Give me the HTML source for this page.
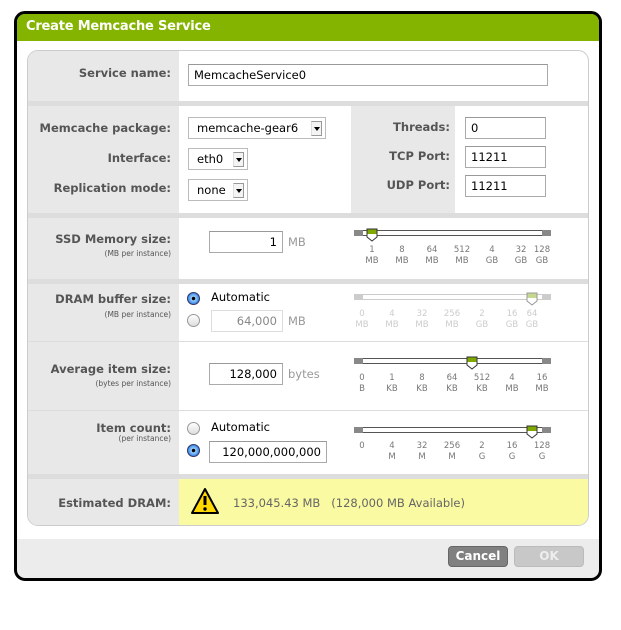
<!DOCTYPE html>
<html><head><meta charset="utf-8">
<style>
*{margin:0;padding:0;box-sizing:border-box}
body{width:621px;height:630px;background:#fff;position:relative;font-family:"DejaVu Sans","Liberation Sans",sans-serif;overflow:hidden}
.a{position:absolute}
.dlg{left:14px;top:11px;width:588px;height:570px;border:3px solid #000;border-radius:11px;background:#ececec;overflow:hidden}
.hdr{left:0;top:0;width:100%;height:27px;background:#85b400;color:#fff;font-weight:bold;font-size:13px;padding:5px 0 0 9px;letter-spacing:-0.2px}
.wbody{left:0;top:27px;width:100%;height:498px;background:#fff}
.panel{left:27px;top:50px;width:562px;height:476px;border:1px solid #ccc;border-radius:11px;overflow:hidden;background:#fff}
.lbl{position:absolute;right:450px;text-align:right;font-weight:bold;font-size:11.5px;color:#555;white-space:nowrap}
.sub{position:absolute;right:450px;text-align:right;font-size:7.5px;color:#555;white-space:nowrap}
.inp{position:absolute;border:1px solid #aaa;border-top-color:#999;background:#fff;font-size:11.5px;color:#000;height:22px;padding:3px 5px;white-space:nowrap}
.sel{position:absolute;border:1px solid #bbb;background:#fff;font-size:11.5px;height:22px;padding:3px 0 0 8px;white-space:nowrap}
.sel i{position:absolute;right:3px;top:3px;width:11px;height:15px;background:#f4f4f4;border:1px solid #999;border-left-color:#ddd}
.sel i:after{content:"";position:absolute;left:2px;top:5px;border-left:3px solid transparent;border-right:3px solid transparent;border-top:4px solid #000}
.tk{position:absolute;font-size:8.5px;color:#777;text-align:center;line-height:11px;transform:translateX(-50%)}
.dis .tk{color:#ccc}
.trk{position:absolute;left:354px;width:197px;height:6px;background:#fff;border:1px solid #555;border-radius:2px}
.trk:before,.trk:after{content:"";position:absolute;top:-1px;width:9px;height:6px;background:#888}
.trk:before{left:-1px}.trk:after{right:-1px}
.dis .trk{border-color:#ccc}.dis .trk:before,.dis .trk:after{background:#ccc}
.radio{position:absolute;width:13px;height:13px;border-radius:50%;border:1px solid #999;background:linear-gradient(#fff,#ddd)}
.radio.on{background:radial-gradient(circle,#000 0 1.5px,#9cd0ff 2px,#2a7de0 6px);border-color:#336}
.sep{position:absolute;left:0;width:100%;background:#ddd}
</style></head><body>
<div class="a dlg">
 <div class="a hdr">Create Memcache Service</div>
 <div class="a wbody"></div>
 <div class="a" style="left:431px;top:532px;width:60px;height:21px;background:#808080;border:1px solid #666;border-radius:4px;color:#fff;font-weight:bold;font-size:12px;text-align:center;line-height:19px">Cancel</div>
 <div class="a" style="left:497px;top:532px;width:70px;height:21px;background:#c8c8c8;border:1px solid #bbb;border-radius:4px;color:#eee;font-weight:bold;font-size:12px;text-align:center;line-height:19px">OK</div>
</div>
<div class="a panel">
 <div class="a" style="left:0;top:0;width:151px;height:476px;background:#e8e8e8"></div>
 <div class="a" style="left:323px;top:54px;width:104px;height:108px;background:#e8e8e8"></div>
 <div class="sep" style="top:50px;height:5px"></div>
 <div class="sep" style="top:162px;height:5px"></div>
 <div class="sep" style="top:228px;height:5px"></div>
 <div class="sep" style="top:290px;height:1px"></div>
 <div class="sep" style="top:359px;height:1px"></div>
 <div class="sep" style="top:423px;height:5px"></div>
 <div class="a" style="left:151px;top:428px;width:411px;height:48px;background:#fafaa2"></div>
</div>
<div class="a" style="left:0;top:0;width:621px;height:630px">
 <div class="lbl" style="top:66px">Service name:</div>
 <div class="inp" style="left:188px;top:64px;width:360px">MemcacheService0</div>

 <div class="lbl" style="top:121px">Memcache package:</div>
 <div class="lbl" style="top:151px">Interface:</div>
 <div class="lbl" style="top:181px">Replication mode:</div>
 <div class="sel" style="left:188px;top:117px;width:138px">memcache-gear6<i></i></div>
 <div class="sel" style="left:188px;top:148px;width:60px">eth0<i></i></div>
 <div class="sel" style="left:188px;top:179px;width:60px">none<i></i></div>
 <div class="lbl" style="top:120px;right:171px">Threads:</div>
 <div class="lbl" style="top:149px;right:171px">TCP Port:</div>
 <div class="lbl" style="top:178px;right:171px">UDP Port:</div>
 <div class="inp" style="left:465px;top:117px;width:81px">0</div>
 <div class="inp" style="left:465px;top:146px;width:81px">11211</div>
 <div class="inp" style="left:465px;top:175px;width:81px">11211</div>

 <div class="lbl" style="top:232px">SSD Memory size:</div>
 <div class="sub" style="top:249px">(MB per instance)</div>
 <div class="inp" style="left:209px;top:231px;width:74px;text-align:right">1</div>
 <div class="a" style="left:288px;top:235px;font-size:11.5px;color:#999">MB</div>
 <div><div class="trk" style="top:230px"></div>
  <span class="tk" style="left:372px;top:245px">1<br>MB</span><span class="tk" style="left:402px;top:245px">8<br>MB</span><span class="tk" style="left:432px;top:245px">64<br>MB</span><span class="tk" style="left:462px;top:245px">512<br>MB</span><span class="tk" style="left:492px;top:245px">4<br>GB</span><span class="tk" style="left:521px;top:245px">32<br>GB</span><span class="tk" style="left:542px;top:245px">128<br>GB</span>
  <svg class="a" style="left:366px;top:228px" width="12" height="14"><path d="M1 1H11V9L6 13L1 9Z" fill="#fff" stroke="#333"/><path d="M1.5 1.5H10.5V6H1.5Z" fill="#7fa800"/></svg></div>

 <div class="lbl" style="top:292px">DRAM buffer size:</div>
 <div class="sub" style="top:310px">(MB per instance)</div>
 <div class="radio on" style="left:187px;top:292px"></div>
 <div class="a" style="left:211px;top:290px;font-size:11.5px">Automatic</div>
 <div class="radio" style="left:187px;top:314px"></div>
 <div class="inp" style="left:211px;top:310px;width:72px;text-align:right;color:#888;border-color:#ddd">64,000</div>
 <div class="a" style="left:288px;top:314px;font-size:11.5px;color:#999">MB</div>
 <div class="dis"><div class="trk" style="top:294px"></div>
  <span class="tk" style="left:362px;top:309px">0<br>MB</span><span class="tk" style="left:392px;top:309px">4<br>MB</span><span class="tk" style="left:422px;top:309px">32<br>MB</span><span class="tk" style="left:452px;top:309px">256<br>MB</span><span class="tk" style="left:482px;top:309px">2<br>GB</span><span class="tk" style="left:512px;top:309px">16<br>GB</span><span class="tk" style="left:532px;top:309px">64<br>GB</span>
  <svg class="a" style="left:526px;top:292px" width="12" height="14"><path d="M1 1H11V9L6 13L1 9Z" fill="#fff" stroke="#999"/><path d="M1.5 1.5H10.5V6H1.5Z" fill="#c6d890"/></svg></div>

 <div class="lbl" style="top:362px">Average item size:</div>
 <div class="sub" style="top:379px">(bytes per instance)</div>
 <div class="inp" style="left:209px;top:363px;width:74px;text-align:right">128,000</div>
 <div class="a" style="left:288px;top:367px;font-size:11.5px;color:#999">bytes</div>
 <div><div class="trk" style="top:358px"></div>
  <span class="tk" style="left:362px;top:373px">0<br>B</span><span class="tk" style="left:392px;top:373px">1<br>KB</span><span class="tk" style="left:422px;top:373px">8<br>KB</span><span class="tk" style="left:452px;top:373px">64<br>KB</span><span class="tk" style="left:482px;top:373px">512<br>KB</span><span class="tk" style="left:512px;top:373px">4<br>MB</span><span class="tk" style="left:542px;top:373px">16<br>MB</span>
  <svg class="a" style="left:466px;top:356px" width="12" height="14"><path d="M1 1H11V9L6 13L1 9Z" fill="#fff" stroke="#333"/><path d="M1.5 1.5H10.5V6H1.5Z" fill="#7fa800"/></svg></div>

 <div class="lbl" style="top:421px">Item count:</div>
 <div class="sub" style="top:434px">(per instance)</div>
 <div class="radio" style="left:187px;top:422px"></div>
 <div class="a" style="left:211px;top:420px;font-size:11.5px">Automatic</div>
 <div class="radio on" style="left:187px;top:444px"></div>
 <div class="inp" style="left:209px;top:441px;width:118px;text-align:right">120,000,000,000</div>
 <div><div class="trk" style="top:427px"></div>
  <span class="tk" style="left:362px;top:441px">0</span><span class="tk" style="left:392px;top:441px">4<br>M</span><span class="tk" style="left:422px;top:441px">32<br>M</span><span class="tk" style="left:452px;top:441px">256<br>M</span><span class="tk" style="left:482px;top:441px">2<br>G</span><span class="tk" style="left:512px;top:441px">16<br>G</span><span class="tk" style="left:542px;top:441px">128<br>G</span>
  <svg class="a" style="left:526px;top:425px" width="12" height="14"><path d="M1 1H11V9L6 13L1 9Z" fill="#fff" stroke="#333"/><path d="M1.5 1.5H10.5V6H1.5Z" fill="#7fa800"/></svg></div>

 <div class="lbl" style="top:496px">Estimated DRAM:</div>
 <svg class="a" style="left:190px;top:487px" width="30" height="28"><path d="M15 2L28 26H2Z" fill="#ffd800" stroke="#000" stroke-width="2" stroke-linejoin="round"/><path d="M15 9V18" stroke="#000" stroke-width="3"/><circle cx="15" cy="22" r="1.7"/></svg>
 <div class="a" style="left:233px;top:496px;font-size:11.5px;color:#666;white-space:nowrap">133,045.43 MB&nbsp;&nbsp;&nbsp;(128,000 MB Available)</div>
</div>
</body></html>
